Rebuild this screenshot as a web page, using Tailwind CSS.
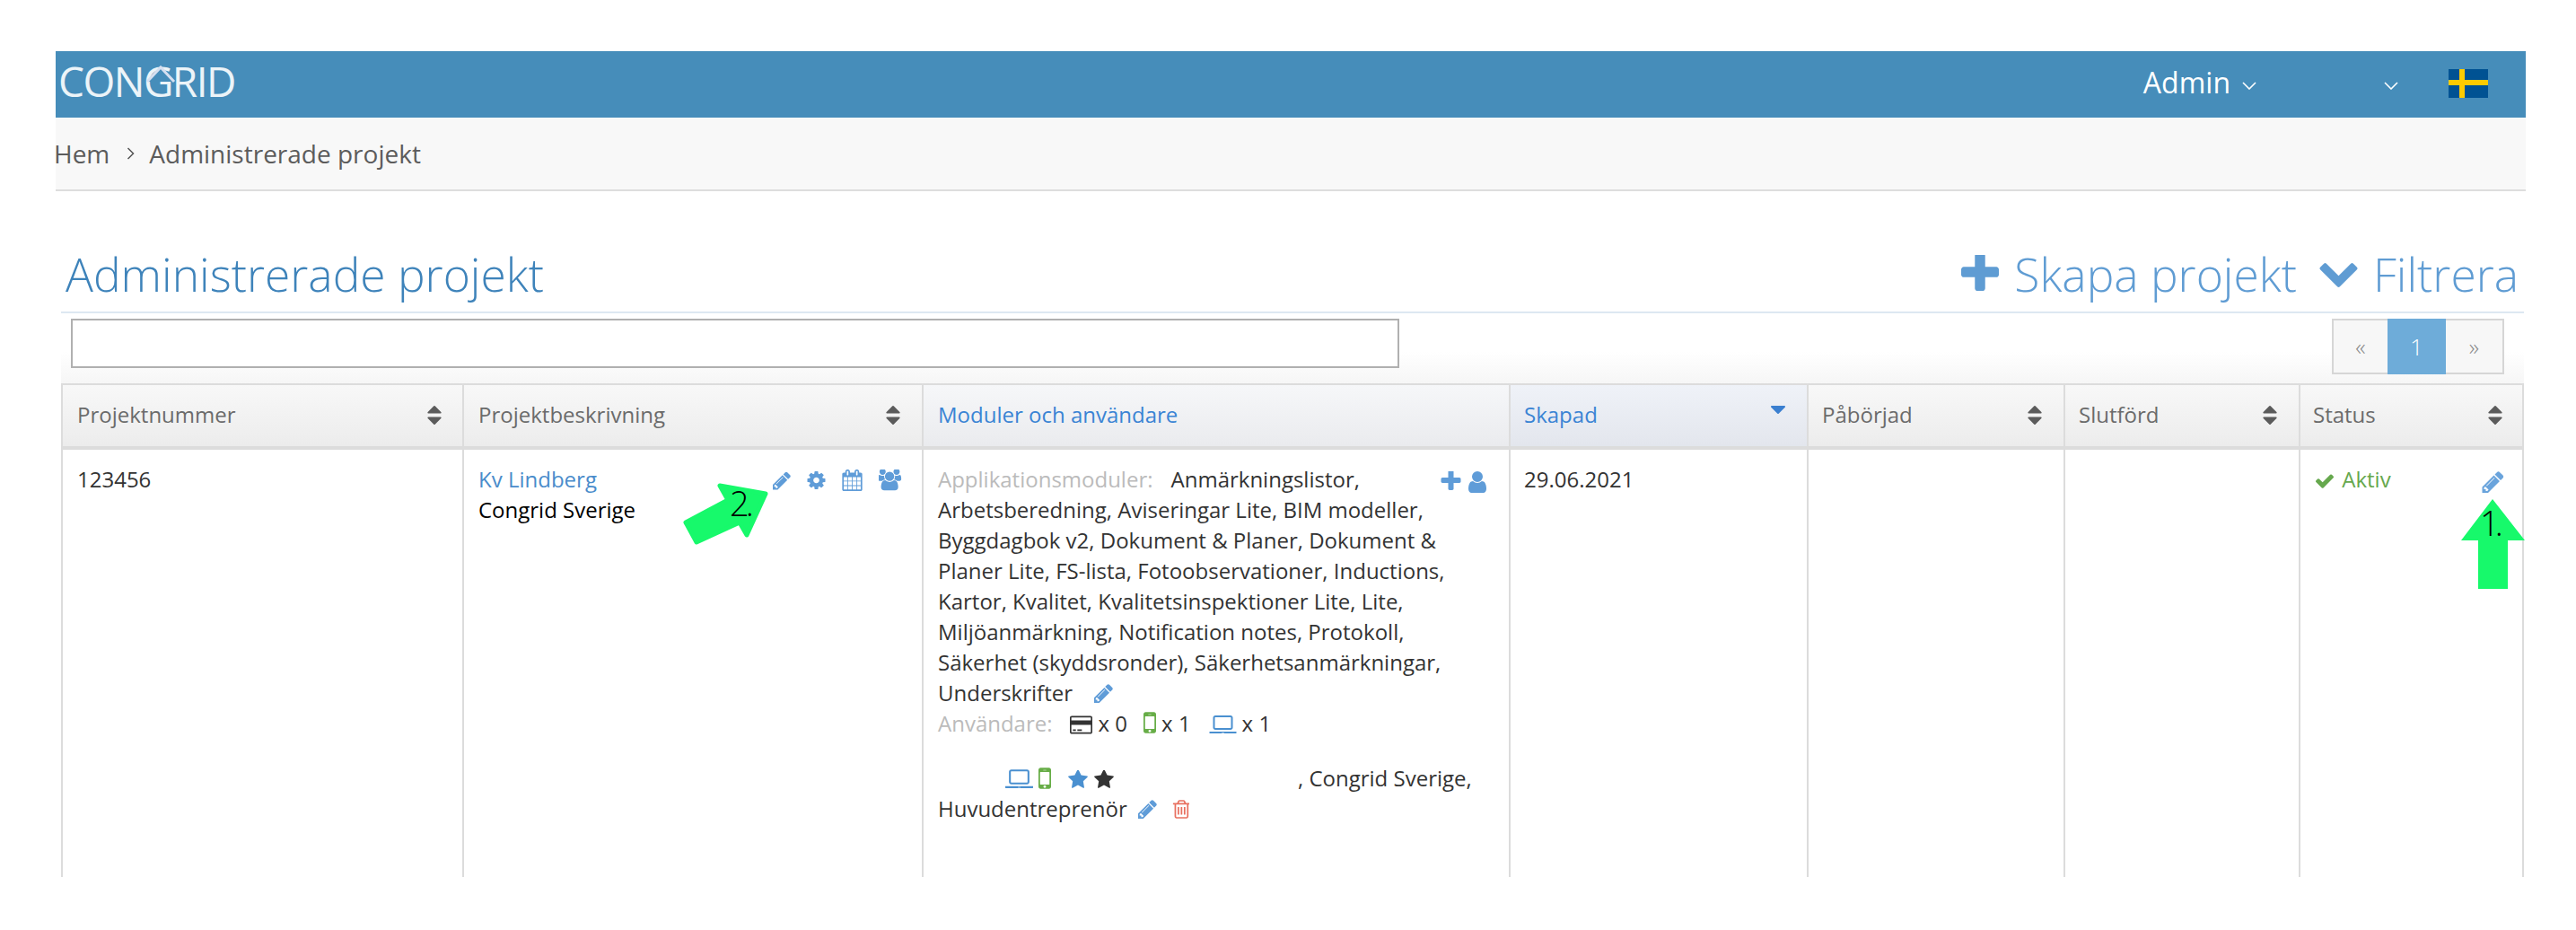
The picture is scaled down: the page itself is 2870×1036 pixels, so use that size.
<!DOCTYPE html>
<html lang="sv">
<head>
    <meta charset="UTF-8">
    <title>Administrerade projekt</title>
    <script src="https://cdn.jsdelivr.net/npm/@tailwindcss/browser@4"></script>
</head>
<body class="bg-white font-['Open_Sans',sans-serif] text-[24px] leading-[34px] text-[#333]">
    <!-- Icon set -->
    <svg class="hidden">
        <symbol id="i-pencil" viewBox="128 128 1536 1536"><path d="M491 1536l91-91-235-235-91 91v107h128v128h107zm523-928q0-22-22-22-10 0-17 7l-542 542q-7 7-7 17 0 22 22 22 10 0 17-7l542-542q7-7 7-17zm-54-192l416 416-832 832h-416v-416zm683 96q0 53-37 90l-166 166-416-416 166-165q36-38 90-38 53 0 91 38l235 234q37 39 37 91z" fill="currentColor"/></symbol>
        <symbol id="i-cog" viewBox="128 128 1536 1536"><path d="M1152 896q0-106-75-181t-181-75-181 75-75 181 75 181 181 75 181-75 75-181zm512-109v222q0 12-8 23t-20 13l-185 28q-19 54-39 91 35 50 107 138 10 12 10 25t-9 23q-27 37-99 108t-94 71q-12 0-26-9l-138-108q-44 23-91 38-16 136-29 186-7 28-36 28h-222q-14 0-24.5-8.5t-11.5-21.5l-28-184q-49-16-90-37l-141 107q-10 9-25 9-14 0-25-11-126-114-165-168-7-10-7-23 0-12 8-23 15-21 51-66.5t54-70.5q-27-50-41-99l-183-27q-13-2-21-12.5t-8-23.5v-222q0-12 8-23t19-13l186-28q14-46 39-92-40-57-107-138-10-12-10-24 0-10 9-23 26-36 98.5-107.5t94.5-71.5q13 0 26 10l138 107q44-23 91-38 16-136 29-186 7-28 36-28h222q14 0 24.5 8.5t11.5 21.5l28 184q49 16 90 37l142-107q9-9 24-9 13 0 25 10 129 119 165 170 7 8 7 22 0 12-8 23-15 21-51 66.5t-54 70.5q26 50 41 98l183 28q13 2 21 12.5t8 23.5z" fill="currentColor"/></symbol>
        <symbol id="i-calendar" viewBox="64 0 1664 1792"><path d="M192 1664h288v-288h-288v288zm352 0h320v-288h-320v288zm-352-352h288v-320h-288v320zm352 0h320v-320h-320v320zm-352-384h288v-288h-288v288zm736 736h320v-288h-320v288zm-384-736h320v-288h-320v288zm768 736h288v-288h-288v288zm-384-352h320v-320h-320v320zm-352-864v-288q0-13-9.5-22.5t-22.5-9.5h-64q-13 0-22.5 9.5t-9.5 22.5v288q0 13 9.5 22.5t22.5 9.5h64q13 0 22.5-9.5t9.5-22.5zm736 864h288v-320h-288v320zm-384-384h320v-288h-320v288zm384 0h288v-288h-288v288zm32-480v-288q0-13-9.5-22.5t-22.5-9.5h-64q-13 0-22.5 9.5t-9.5 22.5v288q0 13 9.5 22.5t22.5 9.5h64q13 0 22.5-9.5t9.5-22.5zm384-64v1280q0 52-38 90t-90 38h-1408q-52 0-90-38t-38-90v-1280q0-52 38-90t90-38h128v-96q0-66 47-113t113-47h64q66 0 113 47t47 113v96h384v-96q0-66 47-113t113-47h64q66 0 113 47t47 113v96h128q52 0 90 38t38 90z" fill="currentColor"/></symbol>
        <symbol id="i-group" viewBox="0 128 1920 1664"><path d="M529 896q-162 5-265 128h-134q-82 0-138-40.5t-56-118.5q0-353 124-353 6 0 43.5 21t97.5 42.5 119 21.5q67 0 133-23-5 37-5 66 0 139 81 256zm1071 637q0 120-73 189.5t-194 69.5h-874q-121 0-194-69.5t-73-189.5q0-53 3.5-103.5t14-109 26.5-108.5 43-97.5 62-81 85.5-53.5 111.5-20q10 0 43 21.5t73 48 107 48 135 21.5 135-21.5 107-48 73-48 43-21.5q61 0 111.5 20t85.5 53.5 62 81 43 97.5 26.5 108.5 14 109 3.5 103.5zm-1024-1277q0 106-75 181t-181 75-181-75-75-181 75-181 181-75 181 75 75 181zm704 384q0 159-112.5 271.5t-271.5 112.5-271.5-112.5-112.5-271.5 112.5-271.5 271.5-112.5 271.5 112.5 112.5 271.5zm576 225q0 78-56 118.5t-138 40.5h-134q-103-123-265-128 81-117 81-256 0-29-5-66 66 23 133 23 59 0 119-21.5t97.5-42.5 43.5-21q124 0 124 353zm-128-609q0 106-75 181t-181 75-181-75-75-181 75-181 181-75 181 75 75 181z" fill="currentColor"/></symbol>
        <symbol id="i-plus" viewBox="192 192 1408 1408"><path d="M1600 736v192q0 40-28 68t-68 28h-416v416q0 40-28 68t-68 28h-192q-40 0-68-28t-28-68v-416h-416q-40 0-68-28t-28-68v-192q0-40 28-68t68-28h416v-416q0-40 28-68t68-28h192q40 0 68 28t28 68v416h416q40 0 68 28t28 68z" fill="currentColor"/></symbol>
        <symbol id="i-user" viewBox="256 128 1280 1536"><path d="M1536 1399q0 109-62.5 187t-150.5 78h-854q-88 0-150.5-78t-62.5-187q0-85 8.5-160.5t31.5-152 58.5-131 94-89 134.5-34.5q131 128 313 128t313-128q76 0 134.5 34.5t94 89 58.5 131 31.5 152 8.5 160.5zm-256-887q0 159-112.5 271.5t-271.5 112.5-271.5-112.5-112.5-271.5 112.5-271.5 271.5-112.5 271.5 112.5 112.5 271.5z" fill="currentColor"/></symbol>
        <symbol id="i-chevron" viewBox="64 416 1664 1152"><path d="M1683 808l-742 741q-19 19-45 19t-45-19l-742-741q-19-19-19-45.5t19-45.5l166-165q19-19 45-19t45 19l531 531 531-531q19-19 45-19t45 19l166 165q19 19 19 45.5t-19 45.5z" fill="currentColor"/></symbol>
        <symbol id="i-check" viewBox="121 310 1550 1212"><path d="M1671 566q0 40-28 68l-724 724-136 136q-28 28-68 28t-68-28l-136-136-362-362q-28-28-28-68t28-68l136-136q28-28 68-28t68 28l294 295 656-657q28-28 68-28t68 28l136 136q28 28 28 68z" fill="currentColor"/></symbol>
        <symbol id="i-star" viewBox="64 108 1664 1600"><path d="M1728 647q0 22-26 48l-363 354 86 500q1 7 1 20 0 21-10.5 35.5t-30.5 14.5q-19 0-40-12l-449-236-449 236q-22 12-40 12-21 0-31.5-14.5t-10.5-35.5q0-6 2-20l86-500-364-354q-25-27-25-48 0-37 56-46l502-73 225-455q19-41 49-41t49 41l225 455 502 73q56 9 56 46z" fill="currentColor"/></symbol>
        <symbol id="i-trash" viewBox="128 128 1408 1536"><path d="M704 736v576q0 14-9 23t-23 9h-64q-14 0-23-9t-9-23v-576q0-14 9-23t23-9h64q14 0 23 9t9 23zm256 0v576q0 14-9 23t-23 9h-64q-14 0-23-9t-9-23v-576q0-14 9-23t23-9h64q14 0 23 9t9 23zm256 0v576q0 14-9 23t-23 9h-64q-14 0-23-9t-9-23v-576q0-14 9-23t23-9h64q14 0 23 9t9 23zm128 724v-948h-896v948q0 22 7 40.5t14.5 27 10.5 8.5h832q3 0 10.5-8.5t14.5-27 7-40.5zm-672-1076h448l-48-117q-7-9-17-11h-317q-10 2-17 11zm928 32v64q0 14-9 23t-23 9h-96v948q0 83-47 143.5t-113 60.5h-832q-66 0-113-58.5t-47-141.5v-952h-96q-14 0-23-9t-9-23v-64q0-14 9-23t23-9h309l70-167q15-37 54-63t79-26h320q40 0 79 26t54 63l70 167h309q14 0 23 9t9 23z" fill="currentColor"/></symbol>
        <symbol id="i-mobile" viewBox="512 256 768 1280"><path d="M976 1408q0-33-23.5-56.5t-56.5-23.5-56.5 23.5-23.5 56.5 23.5 56.5 56.5 23.5 56.5-23.5 23.5-56.5zm208-160v-704q0-13-9.5-22.5t-22.5-9.5h-512q-13 0-22.5 9.5t-9.5 22.5v704q0 13 9.5 22.5t22.5 9.5h512q13 0 22.5-9.5t9.5-22.5zm-192-848q0-16-16-16h-160q-16 0-16 16t16 16h160q16 0 16-16zm288-16v1024q0 52-38 90t-90 38h-512q-52 0-90-38t-38-90v-1024q0-52 38-90t90-38h512q52 0 90 38t38 90z" fill="currentColor"/></symbol>
        <symbol id="i-laptop" viewBox="0 256 1920 1280"><path d="M416 1280q-66 0-113-47t-47-113v-704q0-66 47-113t113-47h1088q66 0 113 47t47 113v704q0 66-47 113t-113 47h-1088zm-32-864v704q0 13 9.5 22.5t22.5 9.5h1088q13 0 22.5-9.5t9.5-22.5v-704q0-13-9.5-22.5t-22.5-9.5h-1088q-13 0-22.5 9.5t-9.5 22.5zm1376 992h160v96q0 40-47 68t-113 28h-1600q-66 0-113-28t-47-68v-96h1760zm-720 96q16 0 16-16t-16-16h-160q-16 0-16 16t16 16h160z" fill="currentColor"/></symbol>
        <symbol id="i-card" viewBox="0 128 1920 1536"><path d="M1760 128q66 0 113 47t47 113v1216q0 66-47 113t-113 47h-1600q-66 0-113-47t-47-113v-1216q0-66 47-113t113-47h1600zm-1600 128q-13 0-22.5 9.5t-9.5 22.5v224h1664v-224q0-13-9.5-22.5t-22.5-9.5h-1600zm1600 1280q13 0 22.5-9.5t9.5-22.5v-608h-1664v608q0 13 9.5 22.5t22.5 9.5h1600zm-1504-128v-128h256v128h-256zm384 0v-128h384v128h-384z" fill="currentColor"/></symbol>
        <symbol id="i-sort" viewBox="384 192 1024 1408"><path d="M1408 1088q0 26-19 45l-448 448q-19 19-45 19t-45-19l-448-448q-19-19-19-45t19-45 45-19h896q26 0 45 19t19 45zm0-384q0 26-19 45t-45 19h-896q-26 0-45-19t-19-45 19-45l448-448q19-19 45-19t45 19l448 448q19 19 19 45z" fill="currentColor"/></symbol>
        <symbol id="i-sort-desc" viewBox="384 1024 1024 576"><path d="M1408 1088q0 26-19 45l-448 448q-19 19-45 19t-45-19l-448-448q-19-19-19-45t19-45 45-19h896q26 0 45 19t19 45z" fill="currentColor"/></symbol>
    </svg>

    <div class="relative w-[2870px] h-[1036px] overflow-hidden">
        <div class="ml-[62px] w-[2752px] pt-[57px]">
            <!-- Top bar -->
            <div class="h-[74px] bg-[#468dba] flex items-center text-white">
                <div class="relative ml-[3px] text-[46px] font-normal leading-none tracking-[-1.5px] text-white/90 -mt-[8px]">CONGRID
                    <svg class="absolute left-[97px] top-[5px] w-[34px] h-[21px]" viewBox="0 0 34 21"><path d="M2 19 L17 3 L32 19" fill="#468dba" stroke="#d5dff0" stroke-width="3"/></svg>
                </div>
                <div class="ml-auto flex items-center">
                    <span class="text-[32px] leading-none -mt-[4px]">Admin</span>
                    <svg class="ml-[13px] w-[16px] h-[9px] mt-[2px]" viewBox="0 0 16 9"><path d="M1 1l7 7 7-7" fill="none" stroke="white" stroke-width="1.6"/></svg>
                    <svg class="ml-[142px] w-[16px] h-[9px] mt-[2px]" viewBox="0 0 16 9"><path d="M1 1l7 7 7-7" fill="none" stroke="white" stroke-width="1.6"/></svg>
                    <svg class="ml-[56px] mr-[42px] w-[44px] h-[32px] -mt-[2px]" viewBox="0 0 44 32">
                        <rect width="44" height="32" fill="#005293"/>
                        <rect x="12" width="6" height="32" fill="#fecb00"/>
                        <rect y="12" width="44" height="6" fill="#fecb00"/>
                    </svg>
                </div>
            </div>

            <!-- Breadcrumb -->
            <div class="h-[82px] bg-[#f8f8f8] border-b-2 border-[#dddddd] flex items-center text-[28px] leading-none text-[#5c5c5c] overflow-hidden">
                <span class="-ml-[2px]">Hem</span>
                <svg class="ml-[19px] w-[10px] h-[14px]" viewBox="0 0 10 14"><path d="M1.5 1l6 6-6 6" fill="none" stroke="#555" stroke-width="1.5"/></svg>
                <span class="ml-[15px]">Administrerade projekt</span>
            </div>

            <div class="ml-[6px] w-[2744px]">
                <!-- Title row -->
                <div class="h-[136px] border-b-2 border-[#dde8f2] flex items-end pb-[7px] pl-[5px] font-light">
                    <h1 class="text-[51.5px] leading-[70px] text-[#3e83ba] font-light">Administrerade projekt</h1>
                    <div class="ml-auto flex items-center text-[51.5px] leading-[70px] text-[#5f9cd3] pr-[6px]">
                        <svg class="w-[42px] h-[42px]"><use href="#i-plus"/></svg>
                        <span class="ml-[17px]">Skapa projekt</span>
                        <svg class="ml-[24px] w-[45px] h-[30px]"><use href="#i-chevron"/></svg>
                        <span class="ml-[16px]">Filtrera</span>
                    </div>
                </div>

                <!-- Search and pager -->
                <div class="h-[78px] pt-[6px] flex items-start bg-linear-to-b from-white from-55% to-[#f6f6f6]">
                    <input class="ml-[11px] w-[1480px] h-[55px] border-2 border-[#b0b0b0] bg-white" type="text">
                    <div class="ml-auto mr-[22px] flex h-[62px] text-[26px] leading-none font-light">
                        <div class="w-[62px] bg-[#f7f7f7] border-2 border-r-0 border-[#d6d6d6] flex items-center justify-center text-[#888]">«</div>
                        <div class="w-[65px] bg-[#6eacd9] flex items-center justify-center text-white">1</div>
                        <div class="w-[65px] bg-[#f7f7f7] border-2 border-l-0 border-[#d6d6d6] flex items-center justify-center text-[#888]">»</div>
                    </div>
                </div>

                <!-- Table -->
                <div class="grid grid-cols-[445px_512px_654px_332px_286px_262px_249px] border-x-2 border-[#dcdcdc]">
                    <div class="h-[74px] border-t-2 border-b-4 border-[#dcdcdc] bg-linear-to-b from-[#f8f8f8] to-[#ececec] flex items-center justify-between pl-[16px] pr-[23px] text-[#6b6b6b]">
                        <span class="-mt-[2px]">Projektnummer</span>
                        <svg class="w-[16px] h-[21px] text-[#5b5b5b] -mt-[2px]"><use href="#i-sort"/></svg>
                    </div>
                    <div class="h-[74px] border-t-2 border-b-4 border-l-2 border-[#dcdcdc] bg-linear-to-b from-[#f8f8f8] to-[#ececec] flex items-center justify-between pl-[16px] pr-[24px] text-[#6b6b6b]">
                        <span class="-mt-[2px]">Projektbeskrivning</span>
                        <svg class="w-[16px] h-[21px] text-[#5b5b5b] -mt-[2px]"><use href="#i-sort"/></svg>
                    </div>
                    <div class="h-[74px] border-t-2 border-b-4 border-l-2 border-[#dcdcdc] bg-linear-to-b from-[#f6f7f9] to-[#eaebee] flex items-center pl-[16px] text-[#3a84d4]">
                        <span class="-mt-[2px]">Moduler och användare</span>
                    </div>
                    <div class="h-[74px] border-t-2 border-b-4 border-l-2 border-[#dcdcdc] bg-linear-to-b from-[#eff2f8] to-[#e3e6ed] flex items-center justify-between pl-[15px] pr-[24px] text-[#3a84d4]">
                        <span class="-mt-[2px]">Skapad</span>
                        <svg class="w-[16px] h-[9px] text-[#3a7fd0] -mt-[14px]"><use href="#i-sort-desc"/></svg>
                    </div>
                    <div class="h-[74px] border-t-2 border-b-4 border-l-2 border-[#dcdcdc] bg-linear-to-b from-[#f8f8f8] to-[#ececec] flex items-center justify-between pl-[15px] pr-[24px] text-[#6b6b6b]">
                        <span class="-mt-[2px]">Påbörjad</span>
                        <svg class="w-[16px] h-[21px] text-[#5b5b5b] -mt-[2px]"><use href="#i-sort"/></svg>
                    </div>
                    <div class="h-[74px] border-t-2 border-b-4 border-l-2 border-[#dcdcdc] bg-linear-to-b from-[#f8f8f8] to-[#ececec] flex items-center justify-between pl-[15px] pr-[24px] text-[#6b6b6b]">
                        <span class="-mt-[2px]">Slutförd</span>
                        <svg class="w-[16px] h-[21px] text-[#5b5b5b] -mt-[2px]"><use href="#i-sort"/></svg>
                    </div>
                    <div class="h-[74px] border-t-2 border-b-4 border-l-2 border-[#dcdcdc] bg-linear-to-b from-[#f8f8f8] to-[#ececec] flex items-center justify-between pl-[14px] pr-[22px] text-[#6b6b6b]">
                        <span class="-mt-[2px]">Status</span>
                        <svg class="w-[16px] h-[21px] text-[#5b5b5b] -mt-[2px]"><use href="#i-sort"/></svg>
                    </div>

                    <!-- Row -->
                    <div class="h-[476px] pl-[16px] pt-[16px]">123456</div>
                    <div class="relative h-[476px] border-l-2 border-[#dcdcdc] pl-[16px] pt-[16px]">
                        <a class="block text-[#4a8ccb]">Kv Lindberg</a>
                        <div class="text-black">Congrid Sverige</div>
                        <div class="absolute top-[23px] right-[22px] flex items-start gap-[18px] text-[#5f9cd8]">
                            <svg class="w-[20px] h-[21px] mt-[1px]"><use href="#i-pencil"/></svg>
                            <svg class="w-[21px] h-[20px] mt-[1px]"><use href="#i-cog"/></svg>
                            <svg class="w-[23px] h-[24px] -mt-[1px]"><use href="#i-calendar"/></svg>
                            <svg class="w-[26px] h-[24px] -mt-[1px]"><use href="#i-group"/></svg>
                        </div>
                    </div>
                    <div class="relative h-[476px] border-l-2 border-[#dcdcdc] pl-[16px] pr-[40px] pt-[16px]">
                        <div class="absolute top-[24px] right-[24px] flex items-start gap-[7px] text-[#5f9cd8]">
                            <svg class="w-[23px] h-[22px]"><use href="#i-plus"/></svg>
                            <svg class="w-[22px] h-[24px]"><use href="#i-user"/></svg>
                        </div>
                        <div><span class="text-[#bbbbbb] mr-[20px]">Applikationsmoduler:</span>Anmärkningslistor,<br>Arbetsberedning, Aviseringar Lite, BIM modeller,<br>Byggdagbok v2, Dokument &amp; Planer, Dokument &amp;<br>Planer Lite, FS-lista, Fotoobservationer, Inductions,<br>Kartor, Kvalitet, Kvalitetsinspektioner Lite, Lite,<br>Miljöanmärkning, Notification notes, Protokoll,<br>Säkerhet (skyddsronder), Säkerhetsanmärkningar,<br>Underskrifter<svg class="inline-block ml-[24px] w-[21px] h-[21px] text-[#5f9cd8] align-[-2px]"><use href="#i-pencil"/></svg></div>
                        <div class="flex items-center h-[34px]">
                            <span class="text-[#bbbbbb]">Användare:</span>
                            <svg class="ml-[19px] w-[25px] h-[21px] text-[#333] mt-[3px]"><use href="#i-card"/></svg>
                            <span class="ml-[7px]">x 0</span>
                            <svg class="ml-[18px] w-[14px] h-[24px] text-[#67ad47] -mt-[3px]"><use href="#i-mobile"/></svg>
                            <span class="ml-[6px]">x 1</span>
                            <svg class="ml-[20px] w-[31px] h-[20px] text-[#4a90d0] mt-[1px]"><use href="#i-laptop"/></svg>
                            <span class="ml-[6px]">x 1</span>
                        </div>
                        <div class="mt-[27px] flex items-center h-[34px]">
                            <svg class="ml-[75px] w-[31px] h-[21px] text-[#4a90d0] mt-[1px]"><use href="#i-laptop"/></svg>
                            <svg class="ml-[6px] w-[14px] h-[24px] text-[#67ad47] -mt-[1px]"><use href="#i-mobile"/></svg>
                            <svg class="ml-[19px] w-[22px] h-[21px] text-[#4a90d0] mt-[2px]"><use href="#i-star"/></svg>
                            <svg class="ml-[7px] w-[22px] h-[21px] text-[#333] mt-[2px]"><use href="#i-star"/></svg>
                            <span class="ml-[205px]">, Congrid Sverige,</span>
                        </div>
                        <div class="flex items-center h-[34px]">
                            <span>Huvudentreprenör</span>
                            <svg class="ml-[12px] w-[21px] h-[21px] text-[#5f9cd8]"><use href="#i-pencil"/></svg>
                            <svg class="ml-[17px] w-[19px] h-[21px] text-[#e8705f]"><use href="#i-trash"/></svg>
                        </div>
                    </div>
                    <div class="h-[476px] border-l-2 border-[#dcdcdc] pl-[15px] pt-[16px]">29.06.2021</div>
                    <div class="h-[476px] border-l-2 border-[#dcdcdc]"></div>
                    <div class="h-[476px] border-l-2 border-[#dcdcdc]"></div>
                    <div class="relative h-[476px] border-l-2 border-[#dcdcdc] pl-[17px] pt-[16px] text-[#66a84d]">
                        <svg class="inline-block w-[20px] h-[16px] align-[-1px]"><use href="#i-check"/></svg>
                        <span class="ml-[3px]">Aktiv</span>
                        <svg class="absolute top-[24px] right-[20px] w-[25px] h-[24px] text-[#6aa4dc]"><use href="#i-pencil"/></svg>
                    </div>
                </div>
            </div>
        </div>

        <!-- Green annotation arrows drawn on top of the screenshot -->
        <svg class="absolute left-0 top-0 w-[2870px] h-[1036px] pointer-events-none" viewBox="0 0 2870 1036">
            <polygon points="802,541 853,550 832,596 824,582 776,604 764,582 811,557" fill="#17f96b" stroke="#17f96b" stroke-width="5" stroke-linejoin="round"/>
            <text x="813" y="575" font-family="Open Sans" font-weight="300" font-size="38" letter-spacing="-4" fill="#000">2.</text>
            <polygon points="2777,556 2813,602 2794,602 2794,656 2761,656 2761,602 2742,602" fill="#17f96b"/>
            <text x="2763" y="597" font-family="Open Sans" font-weight="300" font-size="38" letter-spacing="-5" fill="#000">1.</text>
        </svg>
    </div>
</body>
</html>
